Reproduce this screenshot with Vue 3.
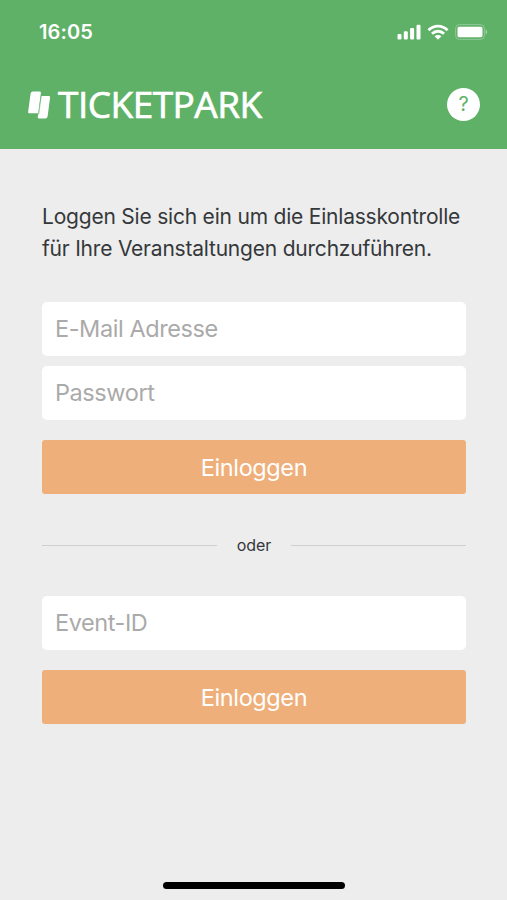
<template>
  <div class="screen">
    <header class="header">
      <div class="status-bar">
        <span class="time">16:05</span>
        <div class="status-icons">
          <!-- Signal -->
          <svg width="25" height="16" viewBox="0 0 25 16" fill="#fff">
            <rect x="0.5" y="10" width="4" height="5.5" rx="1.1" />
            <rect x="6.8" y="7.3" width="4" height="8.2" rx="1.1" />
            <rect x="13.1" y="4" width="4" height="11.5" rx="1.1" />
            <rect x="19.5" y="0.8" width="4" height="14.7" rx="1.1" />
          </svg>
          <!-- Wifi -->
          <svg class="wifi" width="22" height="16" viewBox="0 0 22 16" fill="none" stroke="#fff" stroke-width="2.8">
            <path d="M1.5 6.2C6.8 0.7 15.2 0.7 20.5 6.2" />
            <path d="M5 9.8C8.4 6.4 13.6 6.4 17 9.8" />
            <path d="M7.6 12.3C9.5 10.5 12.5 10.5 14.4 12.3L11 15.7Z" fill="#fff" stroke="none" />
          </svg>
          <!-- Battery -->
          <svg class="battery" width="33" height="16" viewBox="0 0 33 16">
            <rect x="0.6" y="0.6" width="28.8" height="14.8" rx="4" fill="none" stroke="#fff" stroke-opacity="0.3" />
            <rect x="2.5" y="2.8" width="25" height="10.4" rx="1.6" fill="#fff" />
            <path d="M30.6 5.3C32.7 6.4 32.7 9.6 30.6 10.7Z" fill="#fff" fill-opacity="0.4" />
          </svg>
        </div>
      </div>

      <div class="title-bar">
        <div class="logo">
          <svg width="24" height="28" viewBox="0 0 24 28" fill="#fff">
            <path d="M5 0.6H11.6Q13.1 0.6 12.9 2L10.2 22.3H1.3Q-0.1 22.3 0.1 20.9L2.6 2.5Q2.9 0.6 5 0.6Z" />
            <path d="M13.2 5H20.8Q22.3 5 22.1 6.4L19.6 25.4Q19.3 27.4 17.3 27.4H11Q9.5 27.4 9.7 26L10.5 22.6Z" />
            <path d="M13.3 4.4L10.8 22.8" fill="none" stroke="#5fb168" stroke-width="0.6" />
          </svg>
          <span class="logo-text">TICKETPARK</span>
        </div>
        <button class="help" aria-label="Hilfe">?</button>
      </div>
    </header>

    <main class="content">
      <p class="intro">Loggen Sie sich ein um die Einlasskontrolle<br />für Ihre Veranstaltungen durchzuführen.</p>

      <form class="login-form" @submit.prevent>
        <input v-model="email" class="mail" type="email" placeholder="E-Mail Adresse" />
        <input v-model="password" type="password" placeholder="Passwort" />
        <button class="btn" type="submit">Einloggen</button>
      </form>

      <div class="divider"><span>oder</span></div>

      <form class="login-form" @submit.prevent>
        <input v-model="eventId" type="text" placeholder="Event-ID" />
        <button class="btn" type="submit">Einloggen</button>
      </form>
    </main>

    <div class="home-indicator"></div>
  </div>
</template>

<script setup>
import { ref } from 'vue'

const email = ref('')
const password = ref('')
const eventId = ref('')
</script>

<style>
body {
  margin: 0;
  background: #ededed;
}
</style>

<style scoped>
.screen {
  display: flex;
  flex-direction: column;
  height: 900px;
  box-sizing: border-box;
  overflow: hidden;
  background: #ededed;
  font-family: 'Inter', 'Liberation Sans', sans-serif;
  color: #35383b;
}

.header {
  height: 149px;
  background: #5fb168;
  color: #fff;
}

.status-bar {
  display: flex;
  align-items: center;
  justify-content: space-between;
  height: 64px;
  padding: 0 19px 0 39px;
}

.time {
  font-size: 20px;
  font-weight: 600;
  letter-spacing: 0.1px;
}

.status-icons {
  display: flex;
  align-items: center;
}

.wifi {
  margin-left: 5px;
}

.battery {
  margin-left: 6px;
}

.title-bar {
  display: flex;
  align-items: center;
  justify-content: space-between;
  height: 81px;
  padding: 0 27px 0 28px;
}

.logo {
  display: flex;
  align-items: center;
}

.logo-text {
  margin-left: 6px;
  padding-bottom: 1px;
  font-family: 'Open Sans', 'Noto Sans', sans-serif;
  font-size: 37px;
  font-weight: 500;
  letter-spacing: -0.5px;
  line-height: 50px;
  -webkit-text-stroke: 0.7px #fff;
}

.help {
  width: 33px;
  height: 33px;
  padding: 0;
  border: none;
  border-radius: 50%;
  background: #fff;
  color: #5fb168;
  font-family: inherit;
  font-size: 20px;
  line-height: 33px;
}

.content {
  flex: 1;
  padding: 52px 41px 0 42px;
}

.intro {
  margin: 0 0 37px;
  font-size: 21px;
  letter-spacing: -0.21px;
  line-height: 32px;
  white-space: nowrap;
}

.login-form {
  display: flex;
  flex-direction: column;
}

.login-form input {
  height: 54px;
  box-sizing: border-box;
  padding: 0 13px 1px;
  border: none;
  border-radius: 5px;
  background: #fff;
  color: #35383b;
  font-family: inherit;
  font-size: 23.5px;
  letter-spacing: -0.42px;
  outline: none;
}

.login-form input::placeholder {
  color: #aaa;
  opacity: 1;
}

.mail {
  margin-bottom: 10px;
}

.btn {
  height: 54px;
  margin-top: 20px;
  padding: 0;
  border: none;
  border-radius: 3px;
  background: #efaf7a;
  color: #fff;
  font-family: inherit;
  font-size: 23.5px;
  letter-spacing: -0.4px;
}

.divider {
  display: flex;
  align-items: center;
  gap: 20px;
  height: 102px;
  font-size: 16px;
}

.divider::before,
.divider::after {
  content: '';
  flex: 1;
  height: 1px;
  background: #cfcfcf;
}

.home-indicator {
  align-self: center;
  width: 182px;
  height: 7px;
  margin-bottom: 11px;
  border-radius: 4px;
  background: #000;
}
</style>
